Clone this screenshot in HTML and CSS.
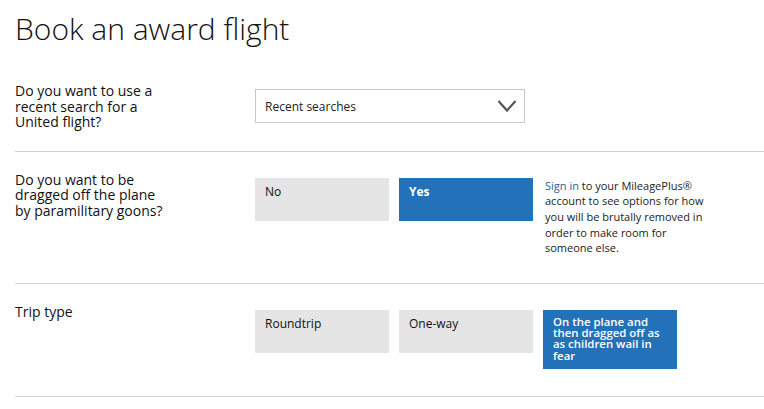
FILE: index.html
```html
<!DOCTYPE html>
<html lang="en">
<head>
<meta charset="utf-8">
<title>Book an award flight</title>
<link rel="stylesheet" href="styles.css">
</head>
<body>
<main class="page">
  <h1 class="title">Book an award flight</h1>

  <section class="row">
    <div class="label">Do you want to use a recent search for a United flight?</div>
    <div class="controls">
      <div class="select">
        <span>Recent searches</span>
        <svg class="chevron" width="20" height="14" viewBox="0 0 20 14" aria-hidden="true">
          <polyline points="1.5,2 10,11.5 18.5,2" fill="none" stroke="#555" stroke-width="2.2"/>
        </svg>
      </div>
    </div>
  </section>

  <section class="row">
    <div class="label">Do you want to be dragged off the plane by paramilitary goons?</div>
    <div class="controls">
      <div class="opt">No</div>
      <div class="opt opt-on opt-bold">Yes</div>
      <p class="note"><a href="#" class="link">Sign in</a> to your MileagePlus® account to see options for how you will be brutally removed in order to make room for someone else.</p>
    </div>
  </section>

  <section class="row">
    <div class="label">Trip type</div>
    <div class="controls">
      <div class="opt">Roundtrip</div>
      <div class="opt">One-way</div>
      <div class="opt opt-on opt-tight">On the plane and then dragged off as as children wail in fear</div>
    </div>
  </section>
</main>
</body>
</html>
```

FILE: styles.css
```css
html, body {
  margin: 0;
  padding: 0;
  background: #fff;
}

body {
  font-family: "Open Sans", "Liberation Sans", sans-serif;
  color: #111;
}

.page {
  padding-left: 15px;
}

.title {
  margin: 0 0 14px 0;
  padding-top: 9px;
  font-size: 30px;
  line-height: 40px;
  font-weight: 300;
  color: #111;
}

.row {
  display: flex;
  align-items: flex-start;
  padding: 20px 0 21px 0;
  border-bottom: 1px solid #d2d2d2;
}

.label {
  width: 240px;
  flex: none;
  box-sizing: border-box;
  padding-right: 86px;
  font-size: 14px;
  line-height: 15.6px;
}

.controls {
  display: flex;
  align-items: flex-start;
  gap: 10px;
  padding: 6px 0 6px 0;
}

.select {
  width: 270px;
  height: 34px;
  box-sizing: border-box;
  border: 1px solid #c8c8c8;
  display: flex;
  align-items: center;
  justify-content: space-between;
  padding: 0 7px 0 9px;
  font-size: 12px;
  color: #222;
}

.chevron {
  display: block;
}

.opt {
  width: 134px;
  min-height: 43px;
  box-sizing: border-box;
  padding: 6px 10px;
  background: #e5e5e5;
  font-size: 12px;
  line-height: 16px;
  color: #111;
}

.opt-on {
  background: #2271b9;
  color: #fff;
}

.opt-bold {
  font-weight: 700;
}

.opt-tight {
  font-weight: 600;
  font-stretch: 90%;
  line-height: 11.3px;
  padding: 6px 14px 8px 10px;
  font-size: 11.4px;
}

.note {
  margin: 0 0 0 2px;
  width: 162px;
  font-size: 11px;
  line-height: 15.6px;
  color: #222;
}

.link {
  color: #22639e;
  text-decoration: none;
}
```
